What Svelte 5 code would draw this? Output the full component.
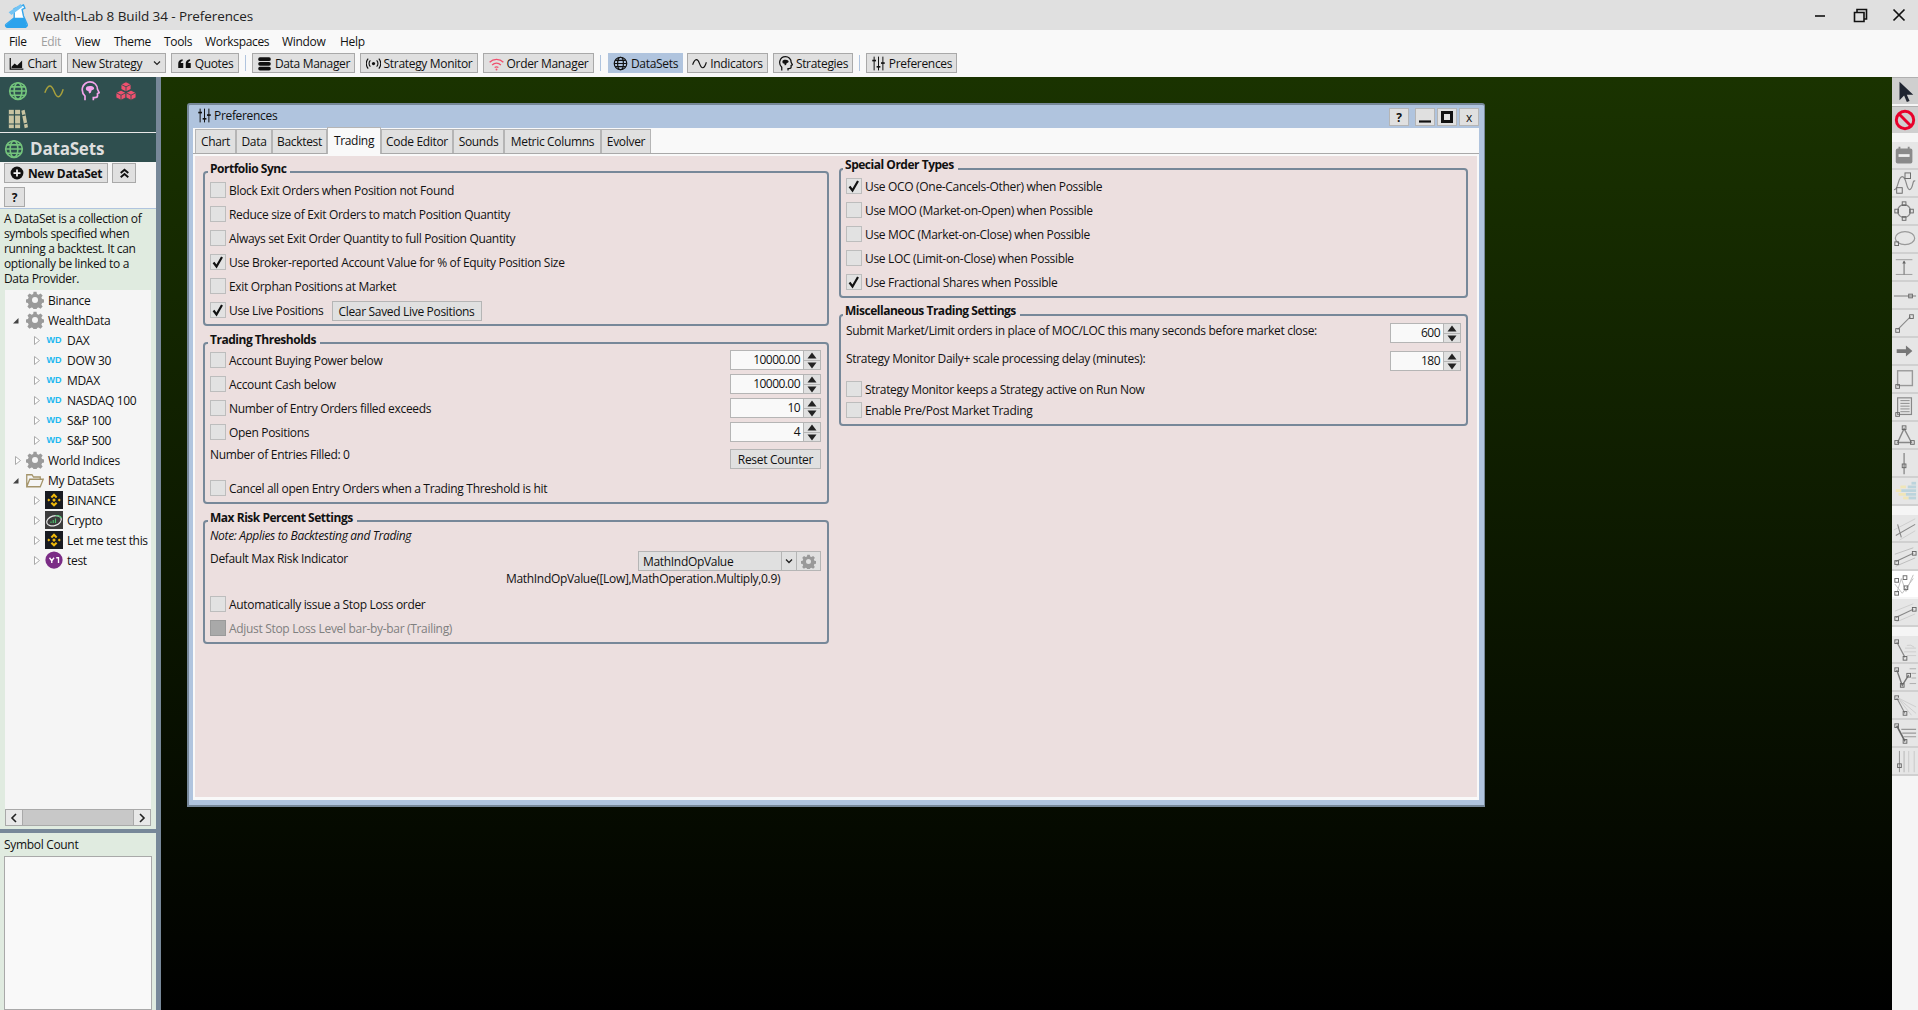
<script>
  const h = (x, y, s = 3) => `<rect x="${x - s / 2}" y="${y - s / 2}" width="${s}" height="${s}" fill="none" stroke="#666" stroke-width="1"/>`;
  const l = (a, b, c, d, col = '#999', w = 1) => `<line x1="${a}" y1="${b}" x2="${c}" y2="${d}" stroke="${col}" stroke-width="${w}"/>`;

  const icons = {
    globe: `<g fill="none" stroke="currentColor" stroke-width="1.9"><circle cx="12" cy="12" r="10"/><ellipse cx="12" cy="12" rx="4.6" ry="10"/><path d="M2 12h20M3.5 7h17M3.5 17h17"/></g>`,
    sine: `<path d="M1 14C5 3 9 4 12 12s7 11 11-2" fill="none" stroke="currentColor" stroke-width="1.8"/>`,
    head: `<path d="M6 23v-5C3 15 2 12 3 8c1-4 5-7 9-7 5 0 9 4 9 9l2 4-2 1v3c0 2-2 2-4 2h-1v3" fill="none" stroke="currentColor" stroke-width="2"/><path d="M7 9c0-2 2-3 5-3 4 0 5 2 5 3s-2 2-3 2l-1 3-2 1-1-3C8 12 7 11 7 9z" fill="currentColor"/>`,
    cubes: `<g fill="currentColor" stroke="#2f4f4f" stroke-width="1"><path d="M12 1l6 3v6l-6 3-6-3V4z"/><path d="M6 11l6 3v6l-6 3-6-3v-6z"/><path d="M18 11l6 3v6l-6 3-6-3v-6z"/></g><path d="M6 4l6 3 6-3M0 14l6 3 6-3 6 3 6-3M12 7v6M6 17v6M18 17v6" fill="none" stroke="#2f4f4f" stroke-width="1"/>`,
    books: `<g fill="currentColor"><rect x="1" y="1" width="6" height="22"/><rect x="8.500" y="1" width="6" height="22"/><path d="M16 2l4-1 4 21-4 1z"/></g><path d="M1 7h13.500M1 18h13.500M17 8l4-1M19 18l4-1" stroke="#2f4f4f" stroke-width="1.400"/>`,
    sliders: `<g fill="none" stroke="currentColor" stroke-width="1.6"><path d="M5 1v22M12 1v22M19 1v22"/></g><g fill="currentColor"><rect x="2" y="6" width="6" height="2.6"/><rect x="9" y="16" width="6" height="2.6"/><rect x="16" y="10" width="6" height="2.6"/></g>`,
    db: `<g fill="currentColor"><rect x="2" y="2" width="20" height="6" rx="2.6"/><rect x="2" y="9.5" width="20" height="6" rx="2.6"/><rect x="2" y="17" width="20" height="6" rx="2.6"/></g>`,
    broadcast: `<circle cx="12" cy="12" r="2.6" fill="currentColor"/><g fill="none" stroke="currentColor" stroke-width="1.8"><path d="M7 7a7 7 0 0 0 0 10M17 7a7 7 0 0 1 0 10M3.5 4a12 12 0 0 0 0 16M20.5 4a12 12 0 0 1 0 16"/></g>`,
    wifi: `<g fill="none" stroke="currentColor" stroke-width="2"><path d="M1 10c6-6 16-6 22 0M5 14.500c4-4 10-4 14 0M9 18.500c2-1.500 4-1.500 6 0"/></g><circle cx="12" cy="21.500" r="1.500" fill="currentColor"/>`,
    quotes: `<g fill="currentColor"><path d="M2 12c0-4 2-6 7-7v3c-2 .5-3 1.500-3 3h4v8H2zM14 12c0-4 2-6 7-7v3c-2 .5-3 1.500-3 3h4v8h-8z"/></g>`,
    chart: `<path d="M2 3v18h21" fill="none" stroke="currentColor" stroke-width="2"/><path d="M4 17l5-5 4 3 8-8v12H4z" fill="currentColor"/>`,
    gear: `<g fill="currentColor"><path fill-rule="evenodd" d="M10 1h4l.6 3 2.200.9 2.600-1.700 2.800 2.800-1.700 2.600.9 2.200 3 .6v4l-3 .6-.9 2.200 1.700 2.600-2.800 2.800-2.600-1.700-2.200.9-.6 3h-4l-.6-3-2.200-.9-2.600 1.700-2.800-2.800 1.700-2.600-.9-2.200-3-.6v-4l3-.6.9-2.200L2 6l2.800-2.800L7.400 4.900 9.600 4zM12 8a4 4 0 1 0 0 8 4 4 0 0 0 0-8z"/></g>`,
    plus: `<circle cx="12" cy="12" r="11" fill="currentColor"/><path d="M12 6v12M6 12h12" stroke="#f5f5f5" stroke-width="3"/>`,
    updbl: `<path d="M5 11l7-6 7 6M5 19l7-6 7 6" fill="none" stroke="currentColor" stroke-width="3.4"/>`,
    folder: `<path d="M1 21V5h7l2 3h9v3M1 21l4-10h18l-4 10z" fill="none" stroke="currentColor" stroke-width="1.700"/>`,
    binance: `<rect width="24" height="24" fill="#181a20"/><g fill="#f0b90b"><path d="M12 3l4.500 4.500-2 2L12 7l-2.500 2.500-2-2zM12 21l-4.500-4.500 2-2L12 17l2.500-2.500 2 2zM3 12l2-2 2 2-2 2zM17 12l2-2 2 2-2 2zM12 9.500l2.500 2.500-2.500 2.500L9.500 12z"/></g>`,
    crypto: `<rect width="24" height="24" fill="#3c3c3c"/><ellipse cx="12" cy="13" rx="10" ry="6.500" fill="none" stroke="#e8e8e8" stroke-width="1.600" transform="rotate(-18 12 13)"/><path d="M8 16v-2M11 16v-4M14 16v-6" stroke="#4cc26e" stroke-width="1.500"/><path d="M14 6a9 6 0 0 1 8 3" stroke="#4cc26e" stroke-width="1.600" fill="none"/>`,
    yahoo: `<circle cx="12" cy="12" r="11.500" fill="#7b2d86"/><path d="M6 9l3 4v3M12 9l-3 4M15 9h3v7" stroke="#fff" stroke-width="1.800" fill="none"/>`,
    logo: `<path d="M11 6l10-4 1.500 3.500-3 1.500 1.500 7 4 9c.5 1.500-.5 2.500-2 2.500H4c-2 0-3-1-2-2.500l9-7z" fill="#fff" stroke="#35a5ea" stroke-width="1.500"/><path d="M2 24l9-8 11 0 3 9c-1 2-2 2-3 2H4c-2 0-3-1-2-3z" fill="#2ba3ec"/><path d="M5 10l13-9 2 3-12 9z" fill="#74c4f4"/>`,
    cursor: `<path d="M6 2v20l5-5 3 7 3-1-3-7h7z" fill="#1f2430"/>`,
    no: `<circle cx="12" cy="12" r="9.500" fill="none" stroke="#e8002a" stroke-width="3.200"/><line x1="5.500" y1="5.500" x2="18.500" y2="18.500" stroke="#e8002a" stroke-width="3.200"/>`
  };

  const tools = [
    { d: `<rect x="3" y="5" width="18" height="16" rx="2" fill="#8a8a8a"/><path d="M7 3v4M17 3v4" stroke="#8a8a8a" stroke-width="2"/><rect x="6" y="11" width="12" height="3" fill="#eee"/>` },
    { d: `<path d="M1 19c5 1 4-14 9-14s4 14 8 14 3-12 6-9" fill="none" stroke="#888" stroke-width="1.300"/>` + h(7, 20, 6) + h(16, 4, 6) },
    { d: `<circle cx="12" cy="12" r="7" fill="none" stroke="#888" stroke-width="1.300"/>` + h(12, 4, 4) + h(12, 20, 4) + h(4, 12, 4) + h(20, 12, 4) },
    { d: `<ellipse cx="13" cy="11" rx="10.500" ry="7" fill="none" stroke="#999" stroke-width="1.300"/>` + h(4, 17, 4) },
    { d: l(3, 4, 21, 4) + l(3, 20, 21, 20) + l(12, 6, 12, 20, '#777', 1.200) + `<path d="M10 8l2-3 2 3z" fill="#666"/>` },
    { d: l(1, 13, 25, 13, '#888', 1.200) + h(19, 13, 4) },
    { d: l(5, 19, 19, 5, '#888', 1.200) + h(5, 20, 4) + h(20, 5, 4) },
    { d: `<path d="M4 10h10V6l7 6-7 6v-4H4z" fill="#777"/>` },
    { d: `<rect x="5" y="3" width="16" height="16" fill="none" stroke="#999" stroke-width="1.500"/>` + h(5, 20, 4) },
    { d: `<rect x="5" y="2" width="15" height="18" fill="none" stroke="#888" stroke-width="1.300"/><path d="M8 5h10M8 8h10M8 11h10M8 14h10M8 17h10" stroke="#888"/>` + h(5, 20, 4) },
    { d: `<path d="M12 5L5 20h15z" fill="none" stroke="#888" stroke-width="1.500"/>` + h(12, 4, 4) + h(4, 20, 4) + h(21, 20, 4) },
    { d: l(12, 1, 12, 24, '#777', 1.200) + h(12, 15, 4) },
    { d: `<g fill="#f0e6b8"><rect x="8" y="6" width="6" height="3"/><rect x="3" y="10" width="6" height="3"/><rect x="6" y="14" width="8" height="3"/><rect x="11" y="18" width="6" height="3"/></g><g fill="#bcd4dc"><rect x="20" y="2" width="5" height="3"/><rect x="16" y="6" width="9" height="3"/><rect x="9" y="10" width="16" height="3"/><rect x="14" y="14" width="11" height="3"/><rect x="17" y="18" width="8" height="3"/></g>` },
    { d: l(1, 14, 24, 2, '#ccc') + l(3, 20, 24, 8, '#888', 1.200) + l(7, 25, 24, 15, '#ccc') + l(5, 8, 9, 22, '#888', 1.200) },
    { d: l(2, 10, 22, 3, '#bbb') + l(3, 18, 22, 9, '#888', 1.200) + l(3, 23, 24, 14, '#bbb') + h(4, 19, 4) + h(23, 9, 4) },
    { white: true, d: `<path d="M4 22L9 6l5 14 8-18M2 12l8 10 12-16" fill="none" stroke="#bbb"/>` + h(4, 8, 4) + h(13, 5, 4) + h(14, 16, 4) + h(4, 22, 4) },
    { d: l(2, 11, 22, 3, '#ccc') + l(3, 18, 22, 9, '#888', 1.200) + l(3, 23, 24, 14, '#ccc') + h(4, 19, 4) + h(23, 9, 4) },
    { d: l(4, 4, 13, 21, '#888', 1.300) + h(4, 4, 4) + h(13, 22, 4) + `<path d="M13 11h12M12 15h13M15 19h10M15 8a8 8 0 0 1 8 2" stroke="#ccc" fill="none"/>` },
    { d: `<path d="M4 4l6 17 7-11" fill="none" stroke="#777" stroke-width="1.500"/>` + h(4, 4, 4) + h(10, 21, 4) + h(17, 10, 4) + `<path d="M18 3h7M20 8h5M20 13h5M18 19h7" stroke="#aaa"/>` },
    { d: l(4, 4, 13, 21, '#888', 1.200) + h(4, 4, 4) + h(13, 21, 4) + `<path d="M5 4l20 10M5 4l20 17M5 4l15 19" stroke="#ccc"/>` },
    { d: l(4, 4, 13, 21, '#666', 1.800) + h(4, 4, 4) + h(13, 21, 4) + `<path d="M9 8h16M10 12h15M11 16h14" stroke="#999" stroke-width="1.200"/>` },
    { d: l(7, 1, 7, 24, '#999', 1.200) + l(12, 1, 12, 24, '#bbb', 1.200) + l(17, 1, 17, 24, '#ccc', 1.200) + l(23, 1, 23, 24, '#ccc', 1.200) + h(7, 17, 4) }
  ];
  const toolGroups = [tools.slice(0, 13), tools.slice(13, 17), tools.slice(17)];

  const menu = [['File', 32], ['Edit', 34, true], ['View', 39], ['Theme', 50], ['Tools', 41], ['Workspaces', 77], ['Window', 58], ['Help', 40]];

  const bar = [
    { t: 'Chart', i: 'chart', w: 58, g: 5 },
    { t: 'New Strategy', w: 99, g: 5, drop: true },
    { t: 'Quotes', i: 'quotes', w: 68, g: 6 },
    { sep: true, g: 6 },
    { t: 'Data Manager', i: 'db', w: 103, g: 5 },
    { t: 'Strategy Monitor', i: 'broadcast', w: 118, g: 5 },
    { t: 'Order Manager', i: 'wifi', w: 111, g: 6, red: true },
    { sep: true, g: 7 },
    { t: 'DataSets', i: 'globe', w: 75, g: 4, active: true },
    { t: 'Indicators', i: 'sine', w: 81, g: 5 },
    { t: 'Strategies', i: 'head', w: 80, g: 6 },
    { sep: true, g: 6 },
    { t: 'Preferences', i: 'sliders', w: 91, g: 0 }
  ];

  const tree = [
    { t: 'Binance', ic: 'gear', lv: 0 },
    { t: 'WealthData', ic: 'gear', lv: 0, open: true },
    { t: 'DAX', wd: true, lv: 1 },
    { t: 'DOW 30', wd: true, lv: 1 },
    { t: 'MDAX', wd: true, lv: 1 },
    { t: 'NASDAQ 100', wd: true, lv: 1 },
    { t: 'S&P 100', wd: true, lv: 1 },
    { t: 'S&P 500', wd: true, lv: 1 },
    { t: 'World Indices', ic: 'gear', lv: 0, closed: true },
    { t: 'My DataSets', ic: 'folder', lv: 0, open: true },
    { t: 'BINANCE', ic: 'binance', lv: 1 },
    { t: 'Crypto', ic: 'crypto', lv: 1 },
    { t: 'Let me test this', ic: 'binance', lv: 1 },
    { t: 'test', ic: 'yahoo', lv: 1 }
  ];

  const tabs = [['Chart', 41], ['Data', 36], ['Backtest', 55], ['Trading', 54, true], ['Code Editor', 72], ['Sounds', 51], ['Metric Columns', 97], ['Evolver', 50]];
</script>

{#snippet icon(name, size, cls = '')}
  <svg class={cls} width={size} height={size} viewBox="0 0 24 24" aria-hidden="true">{@html icons[name]}</svg>
{/snippet}

{#snippet cb(label, checked = false, disabled = false)}
  <div class="row">
    <span class="check" class:dis={disabled}>
      {#if checked}<svg width="14" height="14" viewBox="0 0 14 14"><path d="M2.500 7.500l3 4L11 2" fill="none" stroke="#111" stroke-width="2.200"/></svg>{/if}
    </span>
    <span class:distext={disabled}>{label}</span>
  </div>
{/snippet}

{#snippet spin(v, w = 91)}
  <div class="spin" style="width:{w}px">
    <span class="val">{v}</span>
    <span class="arrows">
      <span class="ab"><svg width="16" height="9" viewBox="0 0 16 9"><path d="M8 1.500L12.500 7.500H3.500z" fill="#222"/></svg></span>
      <span class="ab"><svg width="16" height="9" viewBox="0 0 16 9"><path d="M8 7.500L12.500 1.500H3.500z" fill="#222"/></svg></span>
    </span>
  </div>
{/snippet}

<div class="app">
  <header class="title">
    <svg class="logo" width="26" height="28" viewBox="0 0 28 28" aria-hidden="true">{@html icons.logo}</svg>
    <span class="ttext">Wealth-Lab 8 Build 34 - Preferences</span>
    <div class="winctl">
      <span><svg width="12" height="12" viewBox="0 0 12 12"><path d="M1 7h10" stroke="#111" stroke-width="1.600"/></svg></span>
      <span><svg width="15" height="15" viewBox="0 0 15 15"><path d="M4 4V1.500h9.500V11H11M1.500 4.500H11v9H1.500z" fill="none" stroke="#111" stroke-width="1.600"/></svg></span>
      <span><svg width="14" height="14" viewBox="0 0 14 14"><path d="M1.500 1.500l11 11M12.500 1.500l-11 11" stroke="#111" stroke-width="1.700"/></svg></span>
    </div>
  </header>

  <nav class="menu">
    {#each menu as m}
      <span class:off={m[2]} style="width:{m[1]}px">{m[0]}</span>
    {/each}
  </nav>

  <div class="toolbar">
    {#each bar as b}
      {#if b.sep}
        <i class="sep" style="margin-right:{b.g}px"></i>
      {:else}
        <div class="tb" class:active={b.active} class:red={b.red} style="width:{b.w}px;margin-right:{b.g}px">
          {#if b.i}{@render icon(b.i, 15, 'tbi')}{/if}
          <span>{b.t}</span>
          {#if b.drop}<svg class="dd" width="8" height="6" viewBox="0 0 8 6"><path d="M1 1.500l3 3 3-3" fill="none" stroke="#222" stroke-width="1.200"/></svg>{/if}
        </div>
      {/if}
    {/each}
  </div>

  <main class="main">
    <aside class="left">
      <div class="switch">
        <span class="g">{@render icon('globe', 20)}</span>
        <span class="s">{@render icon('sine', 20)}</span>
        <span class="h">{@render icon('head', 20)}</span>
        <span class="c">{@render icon('cubes', 20)}</span>
        <span class="b">{@render icon('books', 20)}</span>
      </div>
      <div class="dshead"><span class="g">{@render icon('globe', 20)}</span><b>DataSets</b></div>
      <div class="btns">
        <div class="btnrow">
          <div class="btn newds">{@render icon('plus', 14)}<b>New DataSet</b></div>
          <div class="btn up">{@render icon('updbl', 13)}</div>
        </div>
        <div class="btn q"><b>?</b></div>
      </div>
      <p class="desc">A DataSet is a collection of symbols specified when running a backtest. It can optionally be linked to a Data Provider.</p>
      <div class="tree">
        {#each tree as n}
          <div class="node" class:lv1={n.lv === 1}>
            <span class="tw" class:cl={n.closed}>
              {#if n.open}<svg width="7" height="7" viewBox="0 0 7 7"><path d="M6.500 1v5.500H1z" fill="#444"/></svg>
              {:else if n.lv === 1 || n.closed}<svg width="6" height="9" viewBox="0 0 6 9"><path d="M.5.500l5 4-5 4z" fill="#fff" stroke="#aaa"/></svg>{/if}
            </span>
            {#if n.wd}<span class="wd">WD</span>
            {:else}<span class="nic" class:gear={n.ic === 'gear'} class:fold={n.ic === 'folder'}>{@render icon(n.ic, 18)}</span>{/if}
            <span class="nt">{n.t}</span>
          </div>
        {/each}
      </div>
      <div class="hscroll">
        <span class="sb"><svg width="8" height="10" viewBox="0 0 8 10"><path d="M6 1L2 5l4 4" fill="none" stroke="#222" stroke-width="1.600"/></svg></span>
        <span class="tr"></span>
        <span class="sb"><svg width="8" height="10" viewBox="0 0 8 10"><path d="M2 1l4 4-4 4" fill="none" stroke="#222" stroke-width="1.600"/></svg></span>
      </div>
      <div class="hsplit"></div>
      <div class="scount">
        <span class="sclabel">Symbol Count</span>
        <div class="sbox"></div>
      </div>
    </aside>
    <div class="vsplit"></div>

    <section class="desk">
      <div class="win">
        <div class="wtitle">
          {@render icon('sliders', 15)}
          <span class="wname">Preferences</span>
          <div class="wbtns">
            <span class="wb help"><b>?</b></span>
            <span class="wb"><svg width="12" height="12" viewBox="0 0 12 12"><path d="M0 10.500h12" stroke="#111" stroke-width="2.200"/></svg></span>
            <span class="wb"><svg width="12" height="12" viewBox="0 0 12 12"><rect x="1.500" y="1.500" width="9" height="9" fill="none" stroke="#111" stroke-width="3"/></svg></span>
            <span class="wb">x</span>
          </div>
        </div>
        <div class="wbody">
          <div class="tabs">
            {#each tabs as t}
              <span class="tab" class:on={t[2]} style="width:{t[1]}px">{t[0]}</span>
            {/each}
          </div>
          <div class="panel">
            <div class="col lc">
              <div class="grp ps">
                <b class="leg">Portfolio Sync</b>
                {@render cb('Block Exit Orders when Position not Found')}
                {@render cb('Reduce size of Exit Orders to match Position Quantity')}
                {@render cb('Always set Exit Order Quantity to full Position Quantity')}
                {@render cb('Use Broker-reported Account Value for % of Equity Position Size', true)}
                {@render cb('Exit Orphan Positions at Market')}
                <div class="flexrow">
                  {@render cb('Use Live Positions', true)}
                  <div class="pbtn clear">Clear Saved Live Positions</div>
                </div>
              </div>

              <div class="grp tt">
                <b class="leg">Trading Thresholds</b>
                <div class="between">{@render cb('Account Buying Power below')}{@render spin('10000.00')}</div>
                <div class="between">{@render cb('Account Cash below')}{@render spin('10000.00')}</div>
                <div class="between">{@render cb('Number of Entry Orders filled exceeds')}{@render spin('10')}</div>
                <div class="between">{@render cb('Open Positions')}{@render spin('4')}</div>
                <div class="between entries">
                  <span class="plain">Number of Entries Filled: 0</span>
                  <div class="pbtn reset">Reset Counter</div>
                </div>
                <div class="cancel">{@render cb('Cancel all open Entry Orders when a Trading Threshold is hit')}</div>
              </div>

              <div class="grp mr">
                <b class="leg">Max Risk Percent Settings</b>
                <div class="note">Note: Applies to Backtesting and Trading</div>
                <div class="between def">
                  <span class="plain">Default Max Risk Indicator</span>
                  <div class="combo">
                    <span class="cv">MathIndOpValue</span>
                    <span class="cd"><svg width="8" height="6" viewBox="0 0 8 6"><path d="M1 1.500l3 3 3-3" fill="none" stroke="#222" stroke-width="1.300"/></svg></span>
                    <span class="cg">{@render icon('gear', 15)}</span>
                  </div>
                </div>
                <div class="formula">MathIndOpValue([Low],MathOperation.Multiply,0.9)</div>
                <div class="auto">{@render cb('Automatically issue a Stop Loss order')}</div>
                {@render cb('Adjust Stop Loss Level bar-by-bar (Trailing)', false, true)}
              </div>
            </div>

            <div class="col rc">
              <div class="grp so">
                <b class="leg">Special Order Types</b>
                {@render cb('Use OCO (One-Cancels-Other) when Possible', true)}
                {@render cb('Use MOO (Market-on-Open) when Possible')}
                {@render cb('Use MOC (Market-on-Close) when Possible')}
                {@render cb('Use LOC (Limit-on-Close) when Possible')}
                {@render cb('Use Fractional Shares when Possible', true)}
              </div>
              <div class="grp mt">
                <b class="leg">Miscellaneous Trading Settings</b>
                <div class="between mrow"><span class="plain">Submit Market/Limit orders in place of MOC/LOC this many seconds before market close:</span>{@render spin('600', 71)}</div>
                <div class="between mrow r2"><span class="plain">Strategy Monitor Daily+ scale processing delay (minutes):</span>{@render spin('180', 71)}</div>
                <div class="keeps">{@render cb('Strategy Monitor keeps a Strategy active on Run Now')}</div>
                <div class="enable">{@render cb('Enable Pre/Post Market Trading')}</div>
              </div>
            </div>
          </div>
        </div>
      </div>
    </section>

    <aside class="right">
      <div class="tool sel">{@render icon('cursor', 22)}</div>
      <div class="tool sel stop">{@render icon('no', 22)}</div>
      {#each toolGroups as grp}
        <div class="tgroup">
          {#each grp as t}
            <div class="tool" class:white={t.white}>
              <svg width="24" height="24" viewBox="0 0 26 26">{@html t.d}</svg>
            </div>
          {/each}
        </div>
      {/each}
    </aside>
  </main>
</div>

<style>
  :global(body) { margin: 0; background: #000; }
  .app {
    width: 1918px; height: 1010px; overflow: hidden; display: flex; flex-direction: column;
    font-family: "Open Sans", "Noto Sans", sans-serif; font-size: 12px; letter-spacing: -0.32px; color: #111; background: #f9f9f9;
  }
  .title { height: 30px; flex: none; box-sizing: border-box; padding-top: 1px; background: #e0e0e0; display: flex; align-items: center; position: relative; }
  .logo { margin-left: 4px; flex: none; }
  .ttext { margin-left: 3px; font-size: 13.500px; color: #222; letter-spacing: -0.1px; }
  .winctl { margin-left: auto; display: flex; align-items: center; margin-top: -1px; }
  .winctl span { width: 40px; display: flex; justify-content: center; }
  .winctl span:last-child { width: 38px; }

  .menu { height: 23px; flex: none; display: flex; align-items: center; padding-left: 9px; background: #f9f9f9; }
  .menu span { display: block; flex: none; color: #111; }
  .menu .off { color: #a0a0a0; }

  .toolbar { height: 24px; flex: none; display: flex; align-items: flex-start; padding-left: 4px; }
  .tb {
    height: 20px; box-sizing: border-box; flex: none; display: flex; align-items: center; justify-content: center; gap: 3px;
    background: #e0e0e0; border: 1px solid #a9a9a9; white-space: nowrap;
  }
  .tb.active { background: #b0c4de; border-color: #b0c4de; }
  .tb .dd { margin-left: 8px; }
  .tb.red :global(.tbi) { color: #f0506e; }
  .sep { width: 1px; height: 16px; margin-top: 2px; background: #b0c4de; flex: none; }

  .main { flex: 1; display: flex; min-height: 0; }
  .left { width: 156px; flex: none; background: #e0ebe0; display: flex; flex-direction: column; }
  .vsplit { width: 5px; flex: none; background: #778899; }

  .switch {
    height: 56px; flex: none; box-sizing: border-box; background: #2f4f4f; border-bottom: 1px solid #e8e8e8;
    display: flex; flex-wrap: wrap; align-content: flex-start; padding: 4px 0 0 8px; gap: 8px 16px;
  }
  .switch span { display: block; height: 20px; width: 20px; }
  .g { color: #74c47c; }
  .s { color: #a8a03c; }
  .h { color: #f4a4ec; }
  .c { color: #f0506e; }
  .b { color: #c9c4a2; }
  .dshead { height: 29px; flex: none; box-sizing: border-box; padding-top: 2px; background: #2f4f4f; display: flex; align-items: center; gap: 6px; padding-left: 4px; }
  .dshead span { height: 20px; }
  .dshead b { color: #dedede; font-size: 17px; letter-spacing: -0.2px; font-weight: 700; }
  .btns { background: #f5f5f5; height: 47px; flex: none; box-sizing: border-box; padding: 1px 0 0 4px; border-bottom: 1px solid #b0c4de; }
  .btnrow { display: flex; gap: 4px; }
  .btn { background: #e0e0e0; border: 1px solid #a9a9a9; height: 20px; box-sizing: border-box; display: flex; align-items: center; justify-content: center; }
  .newds { width: 104px; gap: 4px; }
  .up { width: 24px; }
  .q { width: 21px; height: 20px; margin-top: 4px; }
  .desc { margin: 0; height: 81px; flex: none; box-sizing: border-box; padding: 2px 2px 0 4px; line-height: 15px; background: #e0ebe0; letter-spacing: -0.35px; }
  .tree { margin: 0 5px; height: 519px; flex: none; background: #f5f5f5; box-sizing: border-box; }
  .node { height: 20px; display: flex; align-items: center; position: relative; padding-left: 7px; }
  .node.lv1 { padding-left: 29px; }
  .tw { width: 14px; flex: none; display: flex; align-items: center; }
  .tw.cl { padding-left: 3px; width: 11px; }
  .lv1 .tw { width: 11px; }
  .nic { width: 18px; height: 18px; flex: none; display: block; margin-right: 4px; }
  .nic svg { display: block; }
  .gear { color: #9a9a9a; }
  .fold { color: #a4946a; }
  .wd { width: 18px; flex: none; margin-right: 4px; color: #1db8f0; font: 700 9px "Liberation Sans", sans-serif; letter-spacing: 0; text-align: center; }
  .nt { white-space: nowrap; }
  .hscroll { margin: 0 5px; height: 17px; flex: none; display: flex; box-sizing: border-box; border: 1px solid #a9a9a9; background: #c8c8c8; }
  .sb { width: 16px; flex: none; background: #e8e8e8; display: flex; align-items: center; justify-content: center; }
  .sb:first-child { border-right: 1px solid #a9a9a9; }
  .sb:last-child { border-left: 1px solid #a9a9a9; }
  .tr { flex: 1; }
  .hsplit { height: 4px; flex: none; margin-top: 3px; background: #778899; }
  .scount { flex: 1; display: flex; flex-direction: column; padding: 3px 4px 0 4px; min-height: 0; }
  .sclabel { height: 20px; line-height: 17px; flex: none; }
  .sbox { flex: 1; background: #f9f9f9; border: 1px solid #a9a9a9; box-sizing: border-box; }

  .desk { flex: 1; position: relative; background: linear-gradient(#1a3300, #000); min-width: 0; }
  .win {
    position: absolute; left: 26px; top: 26px; width: 1298px; height: 704px; box-sizing: border-box;
    border: 2px solid #778899; border-right-width: 1px; border-bottom-width: 2px; border-radius: 3px 3px 0 0; background: #b0c4de;
    display: flex; flex-direction: column; padding: 0 5px 5px 4px;
  }
  .wtitle { height: 23px; flex: none; display: flex; align-items: center; padding-left: 4px; box-sizing: border-box; padding-bottom: 2px; }
  .wname { margin-left: 2px; }
  .wbtns { margin-left: auto; display: flex; margin-top: 3px; }
  .wb { width: 20px; height: 18px; box-sizing: border-box; background: #e0e0e0; border: 1px solid #b5b5b5; display: flex; align-items: center; justify-content: center; margin-left: 2px; }
  .wb.help { margin-right: 4px; }
  .wbody { flex: 1; background: #f9f9f9; display: flex; flex-direction: column; padding: 0 2px 3px 2px; min-height: 0; }
  .tabs { height: 26px; flex: none; display: flex; align-items: flex-end; border-bottom: 1px solid #a9a9a9; box-sizing: border-box; margin: 0 -2px; padding-left: 2px; }
  .tab {
    height: 24px; box-sizing: border-box; flex: none; background: #e0e0e0; border: 1px solid #b5b5b5; border-bottom: 0;
    display: flex; align-items: center; justify-content: center;
  }
  .tab.on { background: #f9f9f9; margin-bottom: -1px; height: 27px; padding-bottom: 2px; }
  .panel { flex: 1; background: #ecdfdf; margin-top: 2px; display: grid; grid-template-columns: 626px 629px; column-gap: 10px; padding-left: 8px; align-content: start; min-height: 0; }
  .col { display: flex; flex-direction: column; gap: 16px; }
  .lc { padding-top: 15px; }
  .rc { padding-top: 12px; }
  .grp { position: relative; border: 2px solid #778899; border-radius: 4px; box-sizing: border-box; padding: 0 6px 0 5px; }
  .rc .grp { padding-right: 5px; }
  .leg { position: absolute; left: 3px; top: -12px; background: #ecdfdf; padding: 0 4px 0 2px; line-height: 16px; font-weight: 700; white-space: nowrap; letter-spacing: -0.48px; }
  .rc .leg { left: 2px; top: -13px; }
  .row { height: 24px; display: flex; align-items: center; white-space: nowrap; flex: none; }
  .check { width: 16px; height: 16px; box-sizing: border-box; flex: none; background: #e2e2e2; border: 1px solid #bdbdbd; margin-right: 3px; display: flex; align-items: center; justify-content: center; }
  .check.dis { background: #a9a9a9; border-color: #9a9a9a; }
  .distext { color: #808080; }
  .flexrow { display: flex; align-items: center; }
  .pbtn { height: 20px; box-sizing: border-box; background: #e0e0e0; border: 1px solid #b5b5b5; display: flex; align-items: center; justify-content: center; flex: none; white-space: nowrap; }
  .clear { width: 150px; margin: 2px 0 0 8px; }
  .reset { width: 91px; }
  .between { display: flex; justify-content: space-between; align-items: center; }
  .plain { white-space: nowrap; }

  .ps { height: 155px; padding-top: 5px; }
  .tt { height: 162px; padding-top: 4px; }
  .entries { height: 20px; margin-top: 5px; align-items: flex-start; }
  .entries .plain { line-height: 16px; margin-top: -2px; }
  .cancel { margin-top: 7px; }
  .spin { height: 20px; box-sizing: border-box; display: flex; background: #f9f9f9; border: 1px solid #b5b5b5; flex: none; }
  .val { flex: 1; text-align: right; padding-right: 3px; line-height: 18px; letter-spacing: -0.55px; }
  .arrows { width: 17px; flex: none; display: flex; flex-direction: column; background: #e0e0e0; border-left: 1px solid #b5b5b5; box-sizing: border-box; }
  .ab { flex: 1; display: flex; align-items: center; justify-content: center; }
  .ab + .ab { border-top: 1px solid #b5b5b5; }

  .mr { height: 124px; padding-top: 4px; }
  .note { height: 20px; line-height: 20px; font-style: italic; }
  .def { height: 20px; margin-top: 5px; align-items: flex-start; }
  .def .plain { line-height: 16px; }
  .combo { width: 183px; height: 20px; display: flex; flex: none; box-sizing: border-box; border: 1px solid #b5b5b5; background: #e0e0e0; }
  .cv { width: 142px; padding-left: 4px; line-height: 19px; box-sizing: border-box; flex: none; }
  .cd { width: 16px; flex: none; display: flex; align-items: center; justify-content: center; border-left: 1px solid #b5b5b5; border-right: 1px solid #b5b5b5; box-sizing: border-box; }
  .cg { flex: 1; display: flex; align-items: center; justify-content: center; color: #999; }
  .formula { height: 16px; line-height: 16px; margin-left: 296px; white-space: nowrap; }
  .auto { margin-top: 5px; }

  .so { height: 130px; padding-top: 4px; }
  .mt { height: 112px; padding-top: 7px; }
  .mrow { height: 20px; align-items: flex-start; }
  .mrow .plain { line-height: 16px; }
  .r2 { margin-top: 8px; }
  .keeps { margin-top: 6px; }
  .enable { margin-top: -2px; }
  .enable :global(.row) { height: 22px; }

  .right { width: 26px; flex: none; background: #f5f5f5; display: flex; flex-direction: column; }
  .tool { height: 26px; flex: none; background: #e6e6e6; border-bottom: 2px solid #d0d0d0; display: flex; align-items: center; justify-content: center; }
  .tool svg { display: block; margin-top: 1px; }
  .tool.sel { background: #cfcfcf; border-top: 1px solid #b0b0b0; border-bottom: 0; height: 26px; }
  .tool.sel svg { margin-top: -1px; }
  .tool.stop { margin-top: 2px; }
  .tool.white { background: #fff; border-color: #f5f5f5; }
  .tgroup { margin-top: 9px; display: flex; flex-direction: column; }
</style>
